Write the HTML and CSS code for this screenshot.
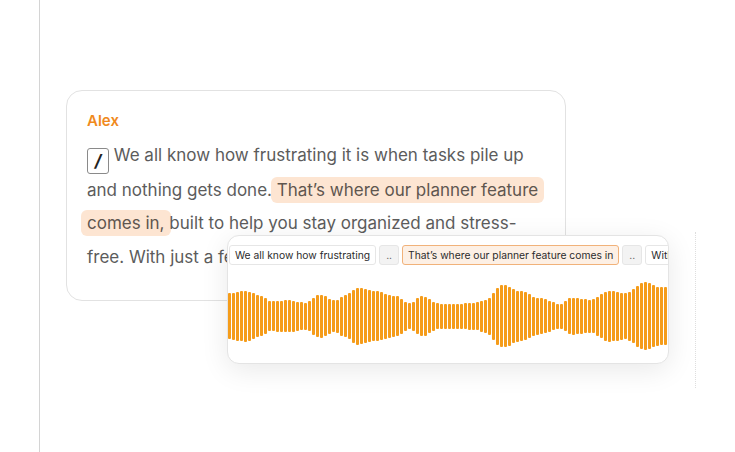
FILE: index.html
```html
<!DOCTYPE html>
<html>
<head>
<meta charset="utf-8">
<link rel="stylesheet" href="styles.css">
</head>
<body>
<div class="stage">
  <div class="card">
    <div class="speaker">Alex</div>
    <p class="text"><span class="key">/</span> We all know how frustrating it is when tasks pile up and nothing gets done. <span class="hl">That’s where our planner feature comes in,</span> built to help you stay organized and stress-free. With just a few clicks.</p>
  </div>
  <div class="guide"></div>
  <div class="panel">
    <div class="chips">
      <span class="chip">We all know how frustrating</span>
      <span class="chip gap">..</span>
      <span class="chip active">That’s where our planner feature comes in</span>
      <span class="chip gap">..</span>
      <span class="chip">With just a few clicks</span>
    </div>
    <div class="wave" id="wave"></div>
  </div>
</div>
<script src="script.js"></script>
</body>
</html>
```

FILE: styles.css
```css
* { box-sizing: border-box; }
html, body { margin: 0; padding: 0; background: #fff; }
body { width: 735px; height: 452px; overflow: hidden; font-family: Inter, "Noto Sans", sans-serif; }

.stage {
  position: relative;
  margin-left: 39px;
  height: 452px;
  border-left: 1px solid #d4d4d4;
  padding-top: 90px;
  padding-left: 26px;
}

.card {
  width: 500px;
  height: 211px;
  border: 1px solid #e2e2e2;
  border-radius: 16px;
  padding: 20px 20px 0 20px;
  overflow: hidden;
}

.speaker {
  color: #f08a1d;
  font-size: 15px;
  font-weight: 600;
  line-height: 20px;
}

.text {
  margin: 8px 0 0 0;
  font-size: 17px;
  line-height: 33.3px;
  color: #5c5c5c;
  width: 462px;
}

.key {
  display: inline-block;
  width: 22px;
  height: 26px;
  border: 1px solid #8a8a8a;
  border-radius: 3px;
  text-align: center;
  line-height: 24px;
  font-weight: 700;
  font-style: italic;
  color: #222;
  font-size: 17px;
  vertical-align: -6px;
}

.hl {
  background: #fde5d2;
  border-radius: 6px;
  padding: 3px 6px;
  margin: 0 -6px;
  -webkit-box-decoration-break: clone;
  box-decoration-break: clone;
  color: #5f564f;
}

.guide {
  position: absolute;
  left: 655px;
  top: 232px;
  height: 156px;
  border-left: 1px dotted #dedede;
}

.panel {
  position: absolute;
  left: 187px;
  top: 235px;
  width: 442px;
  height: 129px;
  background: #fff;
  border: 1px solid #e4e4e4;
  border-radius: 12px;
  box-shadow: 0 6px 28px rgba(0,0,0,0.09);
  overflow: hidden;
}

.chips {
  display: flex;
  gap: 3px;
  padding: 9px 0 0 1px;
  white-space: nowrap;
}

.chip {
  flex: none;
  height: 20px;
  line-height: 18px;
  padding: 0 5px;
  font-size: 10.3px;
  color: #2c2c2c;
  border: 1px solid #e6e6e6;
  border-radius: 3px;
  background: #fff;
}

.chip.gap {
  background: #f3f3f3;
  color: #555;
  padding: 0 6px;
}

.chip.active {
  background: #fdf0e5;
  border-color: #f1b27a;
}

.wave {
  display: flex;
  align-items: center;
  gap: 1px;
  height: 82px;
  margin-top: 10px;
}

.bar {
  flex: none;
  width: 3px;
  background: #f59c1a;
  border-radius: 1px;
}
```

FILE: script.js
```js
(function () {
  var pts = [
    [228, 46], [245, 51], [262, 40], [270, 30], [288, 32], [305, 27], [320, 43],
    [335, 32], [345, 42], [358, 57], [375, 50], [395, 41], [410, 26], [422, 40],
    [440, 25], [455, 25], [475, 27], [485, 33], [503, 63], [520, 50], [540, 36],
    [560, 25], [572, 37], [590, 33], [610, 51], [625, 46], [645, 68], [660, 58], [670, 58]
  ];
  function amp(x) {
    for (var i = 0; i < pts.length - 1; i++) {
      var a = pts[i], b = pts[i + 1];
      if (x >= a[0] && x <= b[0]) {
        var t = (x - a[0]) / (b[0] - a[0]);
        var s = (1 - Math.cos(Math.PI * t)) / 2;
        return a[1] + (b[1] - a[1]) * s;
      }
    }
    return pts[pts.length - 1][1];
  }
  var wave = document.getElementById('wave');
  for (var x = 228; x < 672; x += 4) {
    var d = document.createElement('div');
    d.className = 'bar';
    d.style.height = Math.round(amp(x + 1.5)) + 'px';
    wave.appendChild(d);
  }
})();
```
